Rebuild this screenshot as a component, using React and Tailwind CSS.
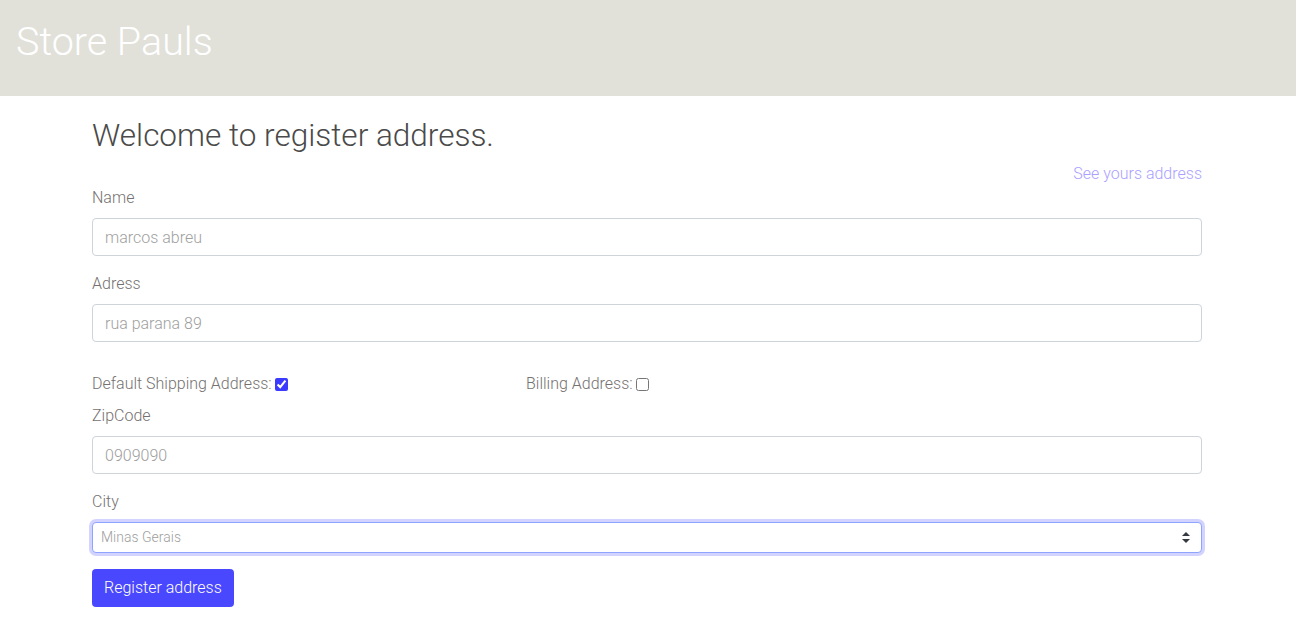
export default function App() {
  const font = { fontFamily: "'Roboto Light', Roboto, 'Noto Sans', sans-serif" };
  return (
    <div className="min-h-[639px] bg-white font-light" style={font}>
      <header className="h-[96px] bg-[#e1e1da] flex items-start pt-[18px] px-[16px]">
        <h1 className="text-[39.5px] font-light text-white leading-[48px]">Store Pauls</h1>
      </header>
      <main className="ml-[92px] w-[1110px]">
        <h2 className="text-[31.5px] leading-[38px] font-light text-[#4a4a4a] mt-[21px]">Welcome to register address.</h2>
        <div className="flex justify-end mt-[7px]">
          <a href="#" className="text-[16px] leading-[24px] text-[#ab9fff]">See yours address</a>
        </div>
        <form className="text-[16px] text-[#757170]">
          <div className="mb-[16px]">
            <label className="block leading-[24px] mb-[8px]">Name</label>
            <input className="block w-full h-[38px] border border-[#ced4da] rounded-[4px] px-[12px] text-[16px] placeholder-[#a0a0a0] outline-none" placeholder="marcos abreu" />
          </div>
          <div className="mb-[16px]">
            <label className="block leading-[24px] mb-[8px]">Adress</label>
            <input className="block w-full h-[38px] border border-[#ced4da] rounded-[4px] px-[12px] text-[16px] placeholder-[#a0a0a0] outline-none" placeholder="rua parana 89" />
          </div>
          <div className="flex items-center pt-[14px] h-[24px] box-content mb-[8px] leading-[24px]">
            <label className="w-[434px] flex items-center">
              Default Shipping Address:
              <input type="checkbox" defaultChecked className="ml-[3px] w-[13px] h-[13px] accent-[#3b3bff]" />
            </label>
            <label className="flex items-center">
              Billing Address:
              <input type="checkbox" className="ml-[3px] w-[13px] h-[13px]" />
            </label>
          </div>
          <div className="mb-[16px]">
            <label className="block leading-[24px] mb-[8px]">ZipCode</label>
            <input className="block w-full h-[38px] border border-[#ced4da] rounded-[4px] px-[12px] text-[16px] placeholder-[#a0a0a0] outline-none" placeholder="0909090" />
          </div>
          <div className="mb-[16px]">
            <label className="block leading-[24px] mb-[8px]">City</label>
            <div className="relative">
              <select className="appearance-none block w-full h-[31px] border border-[#8fa4ff] rounded-[4px] pl-[8px] text-[14px] text-[#a0a0a0] outline-none shadow-[0_0_0_3px_rgba(130,130,255,0.35)] bg-white">
                <option>Minas Gerais</option>
              </select>
              <svg className="absolute right-[12px] top-[10px] pointer-events-none" width="8" height="11" viewBox="0 0 8 11">
                <path d="M4 0 L8 4 L0 4 Z M0 7 L8 7 L4 11 Z" fill="#343a40" />
              </svg>
            </div>
          </div>
          <button type="button" className="h-[38px] px-[12px] bg-[#4a48ff] text-white rounded-[4px] text-[16px] font-normal leading-[24px]">Register address</button>
        </form>
      </main>
    </div>
  );
}
